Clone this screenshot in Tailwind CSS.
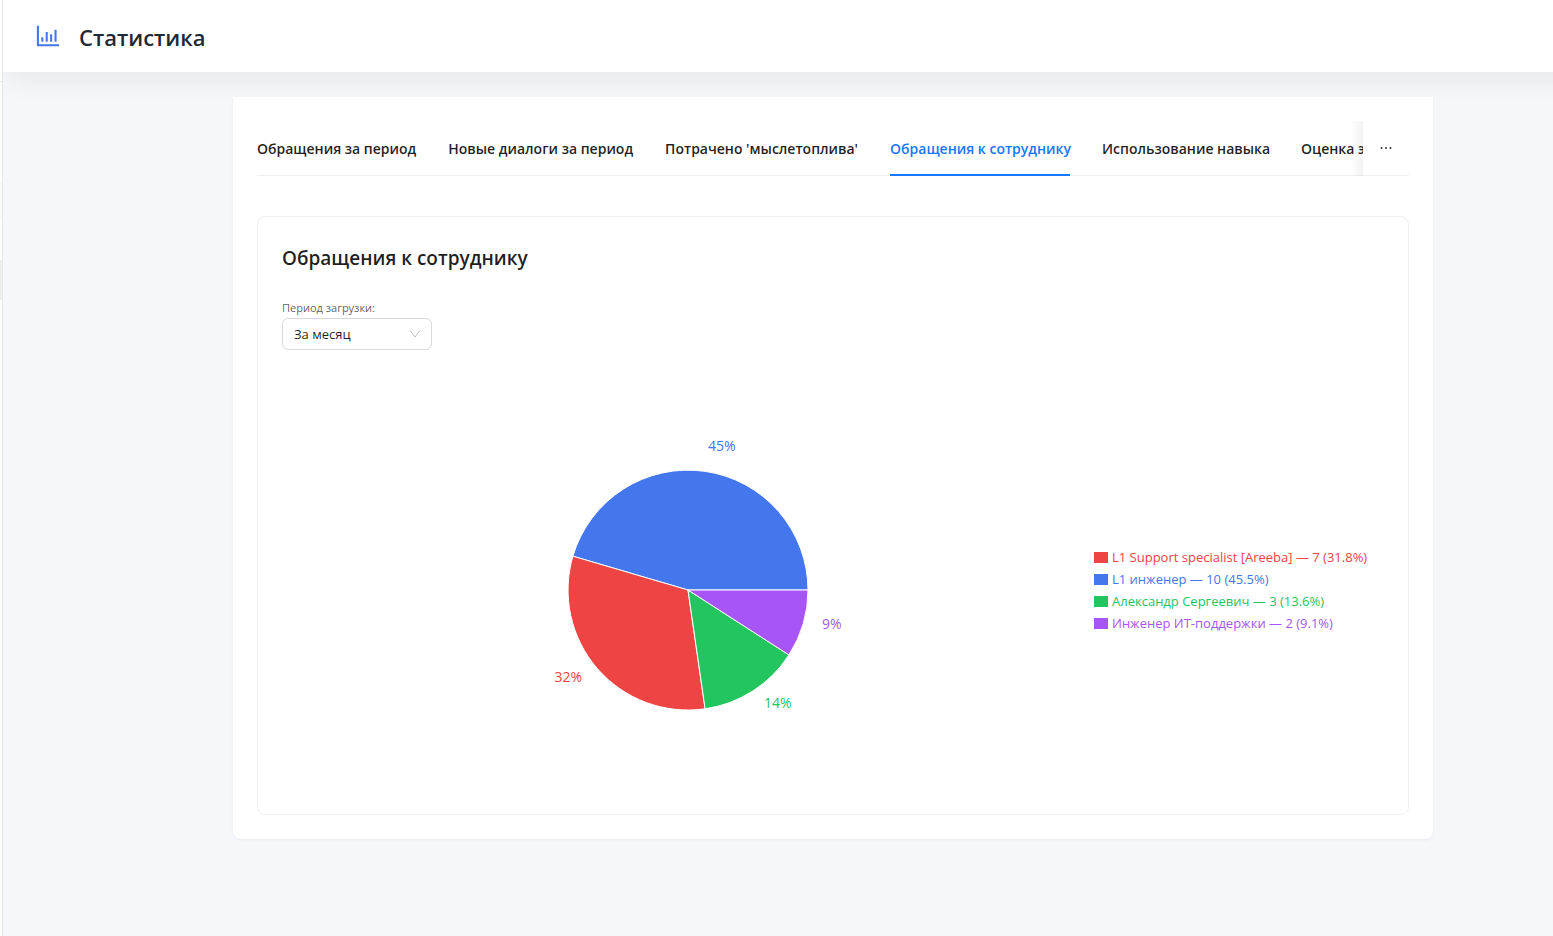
<!DOCTYPE html>
<html lang="ru">
<head>
  <meta charset="UTF-8" />
  <meta name="viewport" content="width=device-width, initial-scale=1.0"/>
  <title>Статистика</title>
  <script src="https://cdn.jsdelivr.net/npm/@tailwindcss/browser@4"></script>
</head>
<body class="flex min-h-screen bg-[#f5f7fb] font-['Segoe_UI','Open_Sans',sans-serif] text-sm text-black/88">

  <!-- Collapsed sidebar edge -->
  <aside class="flex w-[3px] shrink-0 flex-col border-r border-[#e5e7eb] bg-white">
    <div class="h-[82px] border-b border-[#e5e7eb]"></div>
    <div class="mt-[100px] h-[39px] bg-[#fafafa]"></div>
    <div class="mt-[39px] h-10 bg-[#eeeeee]"></div>
  </aside>

  <div class="min-w-0 flex-1 overflow-x-clip">
    <!-- Header -->
    <header class="-mr-10 flex h-18 items-center gap-[18px] bg-white pl-8 shadow-[0_10px_30px_-5px_rgb(0_0_0/0.08)]">
      <svg class="size-[26px] text-[#4477ee]" viewBox="64 64 896 896" fill="currentColor" aria-hidden="true">
        <path d="M888 792H200V168c0-4.4-3.6-8-8-8h-56c-4.4 0-8 3.6-8 8v688c0 4.4 3.6 8 8 8h752c4.4 0 8-3.6 8-8v-56c0-4.4-3.6-8-8-8z"/>
        <path d="M280 552h72v160h-72zM432 376h72v336h-72zM584 454h72v258h-72zM736 296h72v416h-72z"/>
      </svg>
      <h1 class="pt-0.5 text-[22px] leading-8 font-semibold text-[#1f2937]">Статистика</h1>
    </header>

    <main class="pt-[25px] pr-[120px] pb-6 pl-[230px]">
      <div class="relative rounded-b-lg bg-white p-6 shadow-[0_1px_3px_rgb(0_0_0/0.06)]">

        <!-- Tabs -->
        <div class="flex border-b border-[#f0f0f0]">
          <div class="relative min-w-0 flex-1">
            <nav class="-mb-px flex gap-8 overflow-hidden font-semibold whitespace-nowrap" role="tablist">
              <button class="h-[55px] shrink-0" role="tab">Обращения за период</button>
              <button class="h-[55px] shrink-0" role="tab">Новые диалоги за период</button>
              <button class="h-[55px] shrink-0" role="tab">Потрачено 'мыслетоплива'</button>
              <button class="h-[55px] w-[180px] shrink-0 border-y-2 border-t-transparent border-b-[#1677ff] text-[#1677ff]" role="tab" aria-selected="true">Обращения к сотруднику</button>
              <button class="h-[55px] w-[167px] shrink-0" role="tab">Использование навыка</button>
              <button class="h-[55px] shrink-0" role="tab">Оценка эффективности</button>
            </nav>
            <div class="absolute top-0 right-0 -bottom-px w-3 bg-linear-to-l from-black/5 to-transparent"></div>
          </div>
          <button class="w-[46px] shrink-0" aria-label="Ещё">
            <svg class="mx-auto size-[14px]" viewBox="0 0 14 14" fill="currentColor" aria-hidden="true">
              <circle cx="2.5" cy="7" r="0.9"/>
              <circle cx="7" cy="7" r="0.9"/>
              <circle cx="11.5" cy="7" r="0.9"/>
            </svg>
          </button>
        </div>

        <!-- Chart card -->
        <section class="mt-10 rounded-lg border border-[#f0f0f0] p-6">
          <h2 class="text-[19px] leading-[34px] font-semibold">Обращения к сотруднику</h2>

          <div class="mt-[23px] flex flex-col">
            <label for="period" class="text-[11px] leading-5 text-black/65">Период загрузки:</label>
            <div class="relative w-[150px]">
              <select id="period" class="h-8 w-full appearance-none rounded-md border border-[#d9d9d9] bg-white px-[11px] text-[13px]">
                <option>За месяц</option>
              </select>
              <svg class="pointer-events-none absolute top-[10px] right-[11px] size-3 text-black/25" viewBox="0 0 12 12" fill="none" stroke="currentColor" aria-hidden="true">
                <path d="M1 2.5l5 6.5 5-6.5"/>
              </svg>
            </div>
          </div>

          <div class="mt-10 flex h-[400px] items-center">
            <div class="flex flex-1 justify-center">
              <svg class="h-[400px] w-[400px]" viewBox="-200 -200 400 400" font-size="14">
                <g stroke="#fff">
                  <path fill="#4477ee" d="M0 0L120 0A120 120 0 0 0 -115.1 -33.8Z"/>
                  <path fill="#ef4444" d="M0 0L-115.1 -33.8A120 120 0 0 0 17.1 118.8Z"/>
                  <path fill="#22c55e" d="M0 0L17.1 118.8A120 120 0 0 0 100.9 64.9Z"/>
                  <path fill="#a855f7" d="M0 0L100.9 64.9A120 120 0 0 0 120 0Z"/>
                </g>
                <text x="20" y="-139" fill="#4477ee">45%</text>
                <text x="-106" y="92" fill="#ef4444" text-anchor="end">32%</text>
                <text x="76" y="118" fill="#22c55e">14%</text>
                <text x="134" y="39" fill="#a855f7">9%</text>
              </svg>
            </div>
            <ul class="w-[290px] shrink-0 text-[13px] leading-[22px] whitespace-nowrap">
              <li class="flex items-center gap-1 text-[#ef4444]"><span class="h-[11px] w-[14px] shrink-0 bg-[#ef4444]"></span>L1 Support specialist [Areeba] — 7 (31.8%)</li>
              <li class="flex items-center gap-1 text-[#4477ee]"><span class="h-[11px] w-[14px] shrink-0 bg-[#4477ee]"></span>L1 инженер — 10 (45.5%)</li>
              <li class="flex items-center gap-1 text-[#22c55e]"><span class="h-[11px] w-[14px] shrink-0 bg-[#22c55e]"></span>Александр Сергеевич — 3 (13.6%)</li>
              <li class="flex items-center gap-1 text-[#a855f7]"><span class="h-[11px] w-[14px] shrink-0 bg-[#a855f7]"></span>Инженер ИТ-поддержки — 2 (9.1%)</li>
            </ul>
          </div>
        </section>
      </div>
    </main>
  </div>
</body>
</html>
